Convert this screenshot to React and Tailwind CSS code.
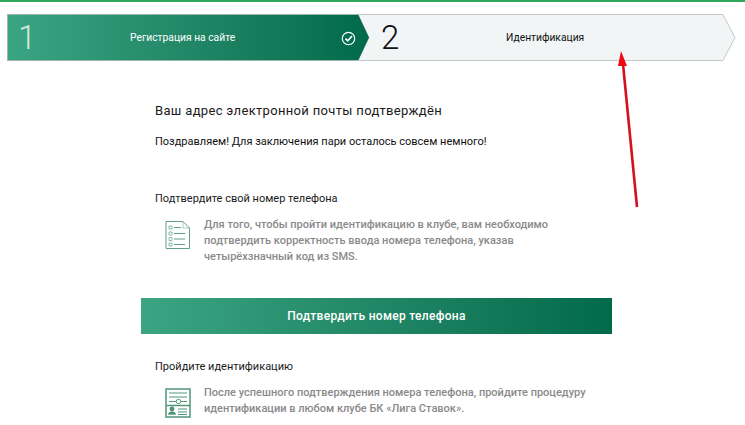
const font = { fontFamily: 'Roboto, sans-serif' };

function CheckIcon() {
  return (
    <svg width="15" height="15" viewBox="0 0 16 16" fill="none" stroke="white" className="shrink-0">
      <circle cx="8" cy="8" r="6.6" strokeWidth="1.3" />
      <path d="M4.8 8.2l2.3 2.3 4.6-5" strokeWidth="1.8" />
    </svg>
  );
}

function ListIcon() {
  return (
    <svg width="26" height="30" viewBox="0 0 26 30" fill="none" stroke="#5f9f87" strokeWidth="1">
      <path d="M1 1.5h17l6.5 6.5v20.500h-23.500z" />
      <path d="M18 1.500v6.500h6.500" strokeOpacity="0.5" />
      <path d="M4 6h3v3h-3zM4 12h3v3h-3zM4 17.500h3v3h-3zM4 23h3v3h-3z" strokeOpacity="0.7" />
      <path d="M9 7.500h7M9 13.500h11M9 19h11M9 24.500h11" strokeWidth="1.2" />
    </svg>
  );
}

function IdIcon() {
  return (
    <svg width="26" height="30" viewBox="0 0 26 30" fill="none" stroke="#4f9679" strokeWidth="1.500">
      <rect x="1" y="1" width="24" height="28" />
      <path d="M1 17.500h24" />
      <path d="M4 5h18M4 9h18M4 13.500h7M16 13.500h6" strokeWidth="1" />
      <circle cx="13.500" cy="13.500" r="2.200" strokeWidth="1" />
      <circle cx="7" cy="21" r="1.700" fill="#4f9679" />
      <path d="M4 26c0-2.500 6-2.500 6 0z" fill="#4f9679" />
      <path d="M13 21h9M13 24h9M13 26.500h9" strokeWidth="1" />
    </svg>
  );
}

function Section({ title, icon, children }) {
  return (
    <div>
      <h3 className="text-[11px] leading-[16px] text-[#1a1a1a]">{title}</h3>
      <div className="flex gap-[13px] pl-[10px] mt-[10px]">
        <div className="shrink-0 pt-[3px]">{icon}</div>
        <p className="text-[11px] leading-[16px] font-medium text-[#8a8a8a] whitespace-nowrap">{children}</p>
      </div>
    </div>
  );
}

export default function App() {
  return (
    <div className="relative w-[745px] h-[425px] overflow-hidden bg-white" style={font}>
      <div className="h-[2px] bg-[#2fa85c]" />

      <div className="flex h-[47px] mt-[12px] ml-[7px] w-[729px]">
        <div className="relative z-10 flex items-center w-[362px] shrink-0 border-y border-l border-[#9fb5ad] bg-gradient-to-r from-[#3aa583] to-[#006a4a] [clip-path:polygon(0_0,351px_0,100%_50%,351px_100%,0_100%)]">
          <span className="w-[122px] pl-[10px] text-[33px] font-light text-[#cfe8de] leading-none">1</span>
          <span className="text-[10.3px] leading-[14px] pt-[1px] text-white">Регистрация на сайте</span>
          <span className="ml-[106px] pt-[1px]"><CheckIcon /></span>
        </div>
        <div className="relative flex-1 -ml-[11px] flex items-center">
          <svg className="absolute inset-0" width="378" height="47" viewBox="0 0 378 47" fill="none">
            <path d="M0 .5H365L377 23.500L365 46.500H0L11 23.500z" fill="#f2f5f6" stroke="#c4c8c8" />
          </svg>
          <span className="relative pl-[23px] w-[148px] text-[33px] font-light text-[#111] leading-none">2</span>
          <span className="relative text-[10.3px] leading-[14px] pt-[1px] text-[#111]">Идентификация</span>
        </div>
      </div>

      <main className="w-[471px] ml-[141px] mt-[39px]">
        <div className="pl-[14px]">
          <h1 className="text-[13px] leading-[22px] tracking-[0.33px] text-[#1a1a1a]">Ваш адрес электронной почты подтверждён</h1>
          <p className="text-[11px] leading-[16px] text-[#111] mt-[12px]">Поздравляем! Для заключения пари осталось совсем немного!</p>
          <div className="mt-[41px]">
            <Section title="Подтвердите свой номер телефона" icon={<ListIcon />}>
              Для того, чтобы пройти идентификацию в клубе, вам необходимо<br />
              подтвердить корректность ввода номера телефона, указав<br />
              четырёхзначный код из SMS.
            </Section>
          </div>
        </div>
        <button className="w-full h-[36px] mt-[33px] block bg-gradient-to-r from-[#3aa583] to-[#006a4a] text-white text-[12px] font-medium tracking-[0.3px]">
          Подтвердить номер телефона
        </button>
        <div className="pl-[14px] mt-[25px]">
          <Section title="Пройдите идентификацию" icon={<IdIcon />}>
            После успешного подтверждения номера телефона, пройдите процедуру<br />
            идентификации в любом клубе БК «Лига Ставок».
          </Section>
        </div>
      </main>

      <svg className="absolute left-[610px] top-[48px]" width="34" height="164" viewBox="0 0 34 164" fill="none">
        <path d="M13 16L27 159" stroke="#d4121e" strokeWidth="2.600" />
        <path d="M11 3L8 18H17z" fill="#ee0a14" />
      </svg>
    </div>
  );
}
